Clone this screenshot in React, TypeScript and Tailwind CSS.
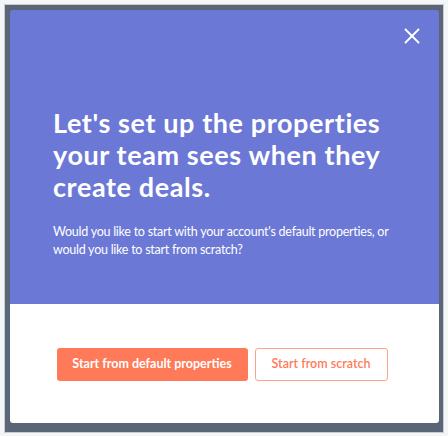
import { X } from 'lucide-react'

const font = { fontFamily: 'Lato, "Open Sans", sans-serif' }

export default function App() {
  return (
    <div className="w-[448px] h-[436px] bg-[#f4f5f6] pt-[4px] pl-[4px] pr-[4px] pb-[3px]" style={font}>
      <div className="h-full border border-[#c9ccd1] bg-[#5a6577] pl-[5px] pt-[5px] pr-[4px] pb-[9px]">
        <Modal />
      </div>
    </div>
  )
}

function Modal() {
  return (
    <div className="h-full flex flex-col rounded-[3px] overflow-hidden">
      <div className="h-[294px] bg-[#6b78d6] relative pl-[43px] pr-[36px] pt-[97px]">
        <button className="absolute top-[13px] right-[14px] text-white" aria-label="Close">
          <X size={26} strokeWidth={1.7} />
        </button>
        <h1 className="text-white font-bold text-[27px] leading-[32px] tracking-[0.6px]">
          Let's set up the properties your team sees when they create deals.
        </h1>
        <p className="mt-[20px] text-white text-[12.5px] leading-[18px] tracking-[-0.25px]">
          Would you like to start with your account's default properties, or would you like to start from scratch?
        </p>
      </div>
      <div className="flex-1 bg-white flex items-center justify-center gap-[7px] pt-[2px] pr-[5px]">
        <button className="w-[191px] h-[33px] rounded-[3px] bg-[#ff7a59] text-white text-[12.5px] font-bold">
          Start from default properties
        </button>
        <button className="w-[133px] h-[33px] rounded-[3px] border border-[#ffa38c] bg-white text-[#ff7a59] text-[12.5px] font-semibold">
          Start from scratch
        </button>
      </div>
    </div>
  )
}
